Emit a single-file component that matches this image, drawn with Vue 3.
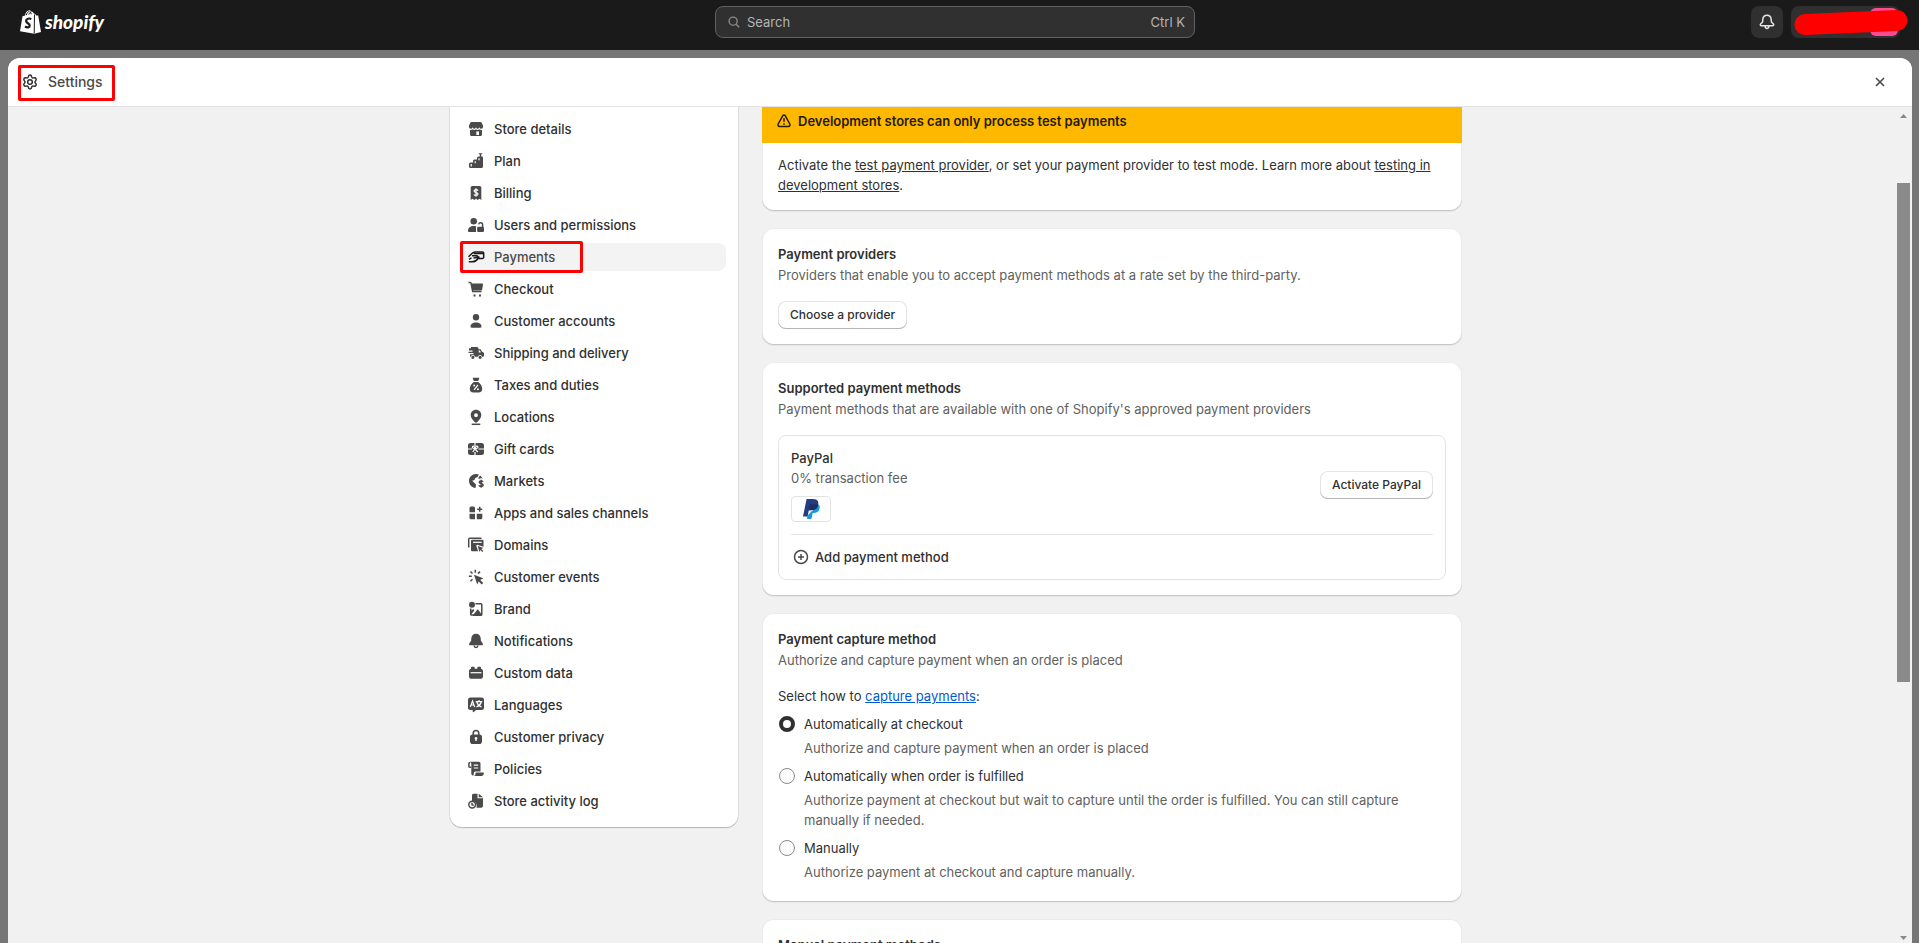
<script setup>
import { ref } from 'vue'

// Each icon is a list of [kind, path]: f = fill, s = stroke, w = white fill, l = white line
const navItems = [
  { label: 'Store details', shapes: [
    ['f', 'M5.6 3h8.800c.6 0 1 .3 1.300.8L17 6.500V8c0 1-.8 1.700-1.800 1.700S13.500 9 13.300 8.200C13 9 12.500 9.700 11.700 9.700S10.200 9 10 8.200C9.800 9 9.200 9.700 8.300 9.700S7 9 6.700 8.200C6.500 9 5.700 9.700 4.800 9.700S3 9 3 8V6.500l1.300-2.700c.3-.5.7-.8 1.300-.8z'],
    ['f', 'M4 11c1.200.2 2.200-.1 2.800-.7.900.8 2.300.8 3.200 0 .9.800 2.300.8 3.200 0 .6.600 1.600.9 2.800.7v4.500a1.500 1.500 0 0 1-1.500 1.500h-9A1.500 1.500 0 0 1 4 15.500zM10.300 12.500v3.500h2.700v-3.500z'],
  ] },
  { label: 'Plan', shapes: [
    ['f', 'M17 6.500v9a1.500 1.500 0 0 1-1.500 1.500h-11A1.500 1.500 0 0 1 3 15.500v-2.500a1.500 1.500 0 0 1 1.500-1.500H7V10a1.500 1.500 0 0 1 1.500-1.500H11V7a1.500 1.500 0 0 1 1.500-1.500H16a1 1 0 0 1 1 1z'],
    ['f', 'M12.500 2.300h4l-1.300 1.500V6h-1.400V3.800z'],
    ['l', 'M5.200 13v2.400M9.200 10.200v2M13 7.200v2'],
  ] },
  { label: 'Billing', shapes: [
    ['f', 'M6.200 3h7.600a1.500 1.500 0 0 1 1.500 1.500V17l-1.800-1.200L11.700 17 10 15.800 8.300 17l-1.800-1.200L4.700 17V4.500A1.500 1.500 0 0 1 6.200 3z'],
    ['l', 'M12 7.700c-.3-.7-1-1-2-1s-1.900.5-1.900 1.400c0 2 3.900.9 3.900 2.900 0 .9-.9 1.400-2 1.400s-1.800-.4-2-1.100M10 5.300v8.500'],
  ] },
  { label: 'Users and permissions', shapes: [
    ['f', 'M7.700 3a3.300 3.300 0 1 1 0 6.600 3.300 3.300 0 0 1 0-6.600zM7.700 11c1 0 1.800.1 2.500.4-.2.400-.2.900-.2 1.400V17H3.300C2.500 17 2 16.500 2 15.700 2 13 4.500 11 7.700 11z'],
    ['f', 'M12.300 11.800h4.500A1.200 1.200 0 0 1 18 13v2.800a1.200 1.200 0 0 1-1.200 1.200h-4.500a1.200 1.200 0 0 1-1.200-1.200V13a1.200 1.200 0 0 1 1.200-1.200z'],
    ['s', 'M12.700 9.300c.2-1 .9-1.500 1.900-1.500 1.200 0 2 .8 2 2v2.500'],
  ] },
  { label: 'Payments', active: true, shapes: [
    ['s', 'M2.500 9.700l3.700-3.400C7 5.500 7.800 5 9 5h7.500a1.200 1.200 0 0 1 1.200 1.200v4a1.200 1.200 0 0 1-1.200 1.200h-4.300'],
    ['s', 'M7.500 6.500h9.800M6 8.800h4.800c1.200 0 1.200 1.500 0 1.700L7.500 11M2.800 14.800h3.500c2.200 0 4-.6 5.700-3.300l1.300-2M3 12.300l2.500-1.500'],
  ] },
  { label: 'Checkout', shapes: [
    ['s', 'M2.600 3.500h1.500c.6 0 .9.300 1 .9l1.600 8.200h8.800'],
    ['f', 'M5 4.500h11a1 1 0 0 1 1 1.200l-.9 5a1 1 0 0 1-1 .8H6.300zM7.500 15.500h2v2h-2zM13 15.500h2v2h-2z'],
  ] },
  { label: 'Customer accounts', shapes: [
    ['f', 'M10 3a3.200 3.200 0 1 1 0 6.400A3.200 3.200 0 0 1 10 3zM10 11.500c3.200 0 5.500 1.600 5.500 4 0 .8-.5 1.200-1.200 1.200H5.700c-.7 0-1.200-.4-1.200-1.200 0-2.400 2.300-4 5.500-4z'],
  ] },
  { label: 'Shipping and delivery', shapes: [
    ['f', 'M5 4h6a1.500 1.500 0 0 1 1.500 1.500v.8h2l1.600 2.400 1.400.8c.4.300.5.600.5 1v2.300a1 1 0 0 1-1 1h-.8a2.200 2.200 0 0 0-4.300 0H9a2.200 2.200 0 0 0-4.300 0H4v-2.500h3.500V10H2.500V8.800h4V7.500h-3.500V5.300H5zM12.700 7.600v1.800h2.200l-1-1.800z'],
    ['f', 'M6.900 12.700a1.600 1.600 0 1 1 0 3.200 1.600 1.600 0 0 1 0-3.200zM14.100 12.700a1.600 1.600 0 1 1 0 3.200 1.600 1.600 0 0 1 0-3.200z'],
  ] },
  { label: 'Taxes and duties', shapes: [
    ['f', 'M7.300 2.800h5.400c.5 0 .7.400.5.800L12.200 6H7.800l-1-2.400c-.2-.4 0-.8.500-.8zM7.800 7h4.400c2.400 1.600 4 4.400 4 7 0 2.200-1.300 3.500-3.500 3.500H7.300c-2.200 0-3.500-1.300-3.500-3.500 0-2.600 1.600-5.400 4-7z'],
    ['l', 'M12 10l-4 4.800'],
    ['w', 'M8.200 9.500a1 1 0 1 1 0 2 1 1 0 0 1 0-2zM11.900 13.300a1 1 0 1 1 0 2 1 1 0 0 1 0-2z'],
  ] },
  { label: 'Locations', shapes: [
    ['f', 'M10 2.700c3.100 0 5.300 2.300 5.300 5.300 0 3.200-2.400 5.300-4.300 7.300-.6.600-1.400.6-2 0-1.900-2-4.300-4.100-4.300-7.300 0-3 2.200-5.300 5.300-5.300zM10 6.300a1.900 1.900 0 1 0 0 3.800 1.900 1.900 0 0 0 0-3.800z'],
    ['s', 'M5.700 17.300h8.600'],
  ] },
  { label: 'Gift cards', shapes: [
    ['f', 'M4.500 4h11A2.500 2.500 0 0 1 18 6.500v7a2.500 2.500 0 0 1-2.500 2.500h-11A2.500 2.500 0 0 1 2 13.500v-7A2.500 2.500 0 0 1 4.500 4z'],
    ['l', 'M9 4v3M9 13v3M2 10h4M12.500 10H18M9 10C7.500 9.800 5.800 8.700 6.500 7.500S9 7.800 9 10c0-2.200 2-3.700 2.800-2.500S10.500 9.800 9 10zM9 10l-2.300 3M9 10l2.800 3'],
  ] },
  { label: 'Markets', shapes: [
    ['f', 'M10 3c1 0 2 .2 2.900.6L11.500 6 9 7.200 8.500 9 6.200 9.800 8.500 12l1.500 1.500-.5 3.400C5.800 16.700 3 13.700 3 10c0-3.900 3.100-7 7-7zM14.200 4.400a7 7 0 0 1 2.500 3.400c-.7-.5-1.600-.6-2.500-.3L12.500 8l.2-1.700z'],
    ['s', 'M17 10.800c-.3-.6-1-.9-1.900-.9-1.100 0-1.900.4-1.900 1.300 0 1.900 3.900.9 3.900 2.800 0 .9-.9 1.400-2 1.400s-1.900-.4-2.100-1.100M15.100 8.700v8'],
  ] },
  { label: 'Apps and sales channels', shapes: [
    ['f', 'M5 3.500h2.500A1.500 1.500 0 0 1 9 5v4.200H3.500V5A1.500 1.500 0 0 1 5 3.500zM3.500 10.800H9v5.500H5a1.500 1.500 0 0 1-1.500-1.500zM10.800 10.800h5.500v4a1.500 1.500 0 0 1-1.500 1.500h-4z'],
    ['s', 'M13.700 3.700v5M11.200 6.200h5'],
  ] },
  { label: 'Domains', shapes: [
    ['s', 'M2.700 12.500V4.500c0-.8.500-1.300 1.300-1.300h11.500'],
    ['f', 'M6.300 4.800h10A1.200 1.200 0 0 1 17.500 6v5.800l-5.700-1.900c-1-.3-1.700.5-1.400 1.400l1.700 4.900H6.300A1.200 1.200 0 0 1 5 15V6a1.200 1.200 0 0 1 1.300-1.200z'],
    ['f', 'M11.800 11l5.700 2-2.200 1 2 2-1 1-2-2-.9 2z'],
    ['l', 'M7 7.300h8.700'],
  ] },
  { label: 'Customer events', shapes: [
    ['f', 'M8 7.800l9.300 3.400-3.100 1.700 3 3-1.500 1.500-3-3-1.500 3z'],
    ['s', 'M9.300 2.800v3M4.500 4.500l2 2M2.800 9.300h3M4.500 14.300l2-2M14 4.600l-2 2'],
  ] },
  { label: 'Brand', shapes: [
    ['f', 'M6 2.800a3 3 0 1 1 0 6 3 3 0 0 1 0-6z'],
    ['s', 'M9.500 4.800H15c.5 0 .8.300.8.800v9.700c0 .5-.3.800-.8.800H5.500c-.5 0-.8-.3-.8-.8V9.500'],
    ['f', 'M7 16.200l4-5.200c.4-.6 1-.6 1.400 0l3.400 4.500v1.500H7zM4.500 12l3-2 .8 1.500L5 15.500z'],
  ] },
  { label: 'Notifications', shapes: [
    ['f', 'M10 2.800c2.800 0 4.500 2 4.700 4.500l.2 2.500 1.800 2.600c.6.900 0 1.800-1 1.800H4.300c-1 0-1.600-.9-1-1.800l1.800-2.600.2-2.500c.2-2.500 1.900-4.500 4.700-4.500z'],
    ['s', 'M8 14.500c.2 1.300 1 2 2 2s1.800-.7 2-2'],
  ] },
  { label: 'Custom data', shapes: [
    ['f', 'M5 5c0-.7.400-1.200 1-1.200h1.700c.6 0 1 .5 1 1.200v.7h2.600V5c0-.7.4-1.200 1-1.200H14c.6 0 1 .5 1 1.200v.8c1.200.3 2 1.200 2 2.500v4.900c0 1.600-1 2.600-2.600 2.600H5.600C4 15.800 3 14.800 3 13.200V8.300c0-1.300.8-2.200 2-2.500z'],
    ['l', 'M4.500 9.700h11'],
  ] },
  { label: 'Languages', shapes: [
    ['f', 'M4.500 2.500h11A2.500 2.500 0 0 1 18 5v7.500a2.500 2.500 0 0 1-2.500 2.500H10l-2.200 2c-.5.400-1 .2-1-.4L6.500 15h-2A2.500 2.500 0 0 1 2 12.500V5a2.500 2.500 0 0 1 2.500-2.500z'],
    ['l', 'M4.300 12l2.200-6 2.200 6M5.200 10h2.700M9.700 6.700h6.600M13 5v1.700M15.200 7c-.5 2.200-2.200 4-4.700 5M10.900 7c.5 2.200 2.200 4 4.700 5'],
  ] },
  { label: 'Customer privacy', shapes: [
    ['s', 'M7.200 8.200V6.500C7.200 4.700 8.300 3.500 10 3.500s2.800 1.200 2.800 3v1.700'],
    ['f', 'M6.500 7.500h7A2.500 2.500 0 0 1 16 10v4.200a2.800 2.800 0 0 1-2.800 2.800H6.800A2.800 2.800 0 0 1 4 14.200V10a2.500 2.500 0 0 1 2.500-2.500zM10 10a1.400 1.400 0 0 0-.7 2.600V14h1.400v-1.400A1.400 1.400 0 0 0 10 10z'],
  ] },
  { label: 'Policies', shapes: [
    ['s', 'M5 8.200H3.800c-.6 0-.9-.3-.9-.9V5c0-.8.6-1.400 1.300-1.400'],
    ['f', 'M4.200 2.800h8.500A1.800 1.800 0 0 1 14.500 4.600v7.900H9.300a1.500 1.500 0 0 0-1.500 1.500v1.500c-.1 1-1 1.200-1.600.8-.6-.3-.9-.9-.9-1.500V4.500z'],
    ['l', 'M7.700 6.200h4.500M7.700 9h4.500'],
    ['f', 'M9.500 13.500h8.200v1.200c0 1.300-.9 2.200-2.200 2.200H8c.9-.5 1.500-1.100 1.500-2z'],
  ] },
  { label: 'Store activity log', shapes: [
    ['f', 'M7.500 2.800h4v4.500h5.500v7.500a2 2 0 0 1-2 2h-4.500c1-3.500-.7-6.500-4.500-6.800V4.500c0-1 .6-1.700 1.500-1.700zM12.700 2.800L17 6.200h-4.300z'],
    ['s', 'M6.200 10.200a3.400 3.400 0 1 1 0 6.800 3.400 3.400 0 0 1 0-6.800zM6 11.800v2l1.700.6'],
  ] },
]

const captureOptions = [
  { id: 'auto', label: 'Automatically at checkout', help: 'Authorize and capture payment when an order is placed' },
  { id: 'fulfilled', label: 'Automatically when order is fulfilled', help: 'Authorize payment at checkout but wait to capture until the order is fulfilled. You can still capture manually if needed.' },
  { id: 'manual', label: 'Manually', help: 'Authorize payment at checkout and capture manually.' },
]
const capture = ref('auto')
</script>

<template>
  <div class="app">
    <header class="topbar">
      <a class="logo" href="#" aria-label="Shopify home">
        <svg class="bag" viewBox="0 0 21 24">
          <path fill="#fff" d="M2.500 6.200L5 5.400C5.600 2.500 7.300.3 9.300.3c.8 0 1.400.5 1.800 1.100 1.400-.2 2.400.9 2.900 2.300l1 .1 1.200 1.600 2 .2L21 22l-6.700 1.700L0 21.200z" />
          <path stroke="#1a1a1a" stroke-width="1" fill="none" d="M6.300 5.200c.5-2.200 1.700-3.600 3-3.700M8.900 4.500c.4-1.400 1-2.200 1.900-2.300M10.200 1.700c.7.600.9 1.600.9 2.600M14.500 4.500l-.3 19" />
          <path stroke="#1a1a1a" stroke-width="2.200" fill="none" d="M11.300 9c-3-1.300-5.300.3-5.200 2.100.1 2 3.600 2.300 3.600 4.500 0 1.900-2.300 2.500-4.700.9" />
        </svg>
        <span class="wordmark">shopify</span>
      </a>
      <label class="search">
        <svg class="search-icon" viewBox="0 0 14 14"><circle cx="6" cy="6" r="4.700" /><path d="M9.500 9.500l3.500 3.500" /></svg>
        <input type="text" placeholder="Search" aria-label="Search" />
        <kbd>Ctrl K</kbd>
      </label>
      <div class="top-actions">
        <button class="bell" aria-label="Notifications">
          <svg viewBox="0 0 20 20"><path d="M10 3.200c2.600 0 4 1.800 4.200 4.200l.2 2.500 2 2.200c.6.700.2 1.600-.7 1.600H4.300c-.9 0-1.300-.9-.7-1.600l2-2.200.2-2.500C6 5 7.400 3.200 10 3.200zM8 14c.1 1.500.9 2.400 2 2.400s1.900-.9 2-2.400" /></svg>
        </button>
        <button class="user" aria-label="Account">
          <span class="avatar"></span>
          <svg class="scribble" viewBox="0 0 120 32"><path d="M14 18.500L106 14.500" /></svg>
        </button>
      </div>
    </header>

    <section class="modal">
      <header class="modal-head">
        <div class="title">
          <svg class="gear" viewBox="0 0 20 20">
            <path d="M8.300 4.200C8.500 3 9 2.400 10 2.400s1.500.6 1.700 1.800c.2.800 1.100 1.300 1.900 1 1.100-.4 1.900-.2 2.400.7s.3 1.600-.6 2.400c-.6.500-.6 1.500 0 2 .9.800 1.100 1.500.6 2.400-.5.900-1.300 1.100-2.400.7-.8-.3-1.700.2-1.900 1-.2 1.200-.7 1.800-1.700 1.800s-1.500-.6-1.700-1.800c-.2-.8-1.100-1.300-1.900-1-1.100.4-1.900.2-2.400-.7-.5-.9-.3-1.600.6-2.400.6-.5.6-1.500 0-2-.9-.8-1.100-1.500-.6-2.400s1.300-1.100 2.400-.7c.8.300 1.700-.2 1.900-1z" transform="translate(0 .7)" />
            <circle cx="10" cy="10" r="2.300" />
          </svg>
          <h1>Settings</h1>
          <span class="mark mark-title"></span>
        </div>
        <button class="close" aria-label="Close"><svg viewBox="0 0 10 10"><path d="M1 1l8 8M9 1l-8 8" /></svg></button>
      </header>

      <div class="body">
        <div class="page">
          <nav class="sidebar">
            <a v-for="item in navItems" :key="item.label" href="#" class="nav-item" :class="{ active: item.active }">
              <svg class="nav-icon" viewBox="0 0 20 20" aria-hidden="true">
                <path v-for="(s, i) in item.shapes" :key="i" :class="s[0]" :d="s[1]" />
              </svg>
              <span>{{ item.label }}</span>
              <span v-if="item.active" class="mark mark-nav"></span>
            </a>
          </nav>

          <main class="cards">
            <section class="card banner">
              <h2 class="banner-head">
                <svg viewBox="0 0 16 16"><path d="M8 2c.6 0 1 .3 1.300.8l4.500 8.200c.6 1.200-.1 2.500-1.400 2.500H3.600c-1.300 0-2-1.300-1.400-2.500L6.700 2.800C7 2.300 7.400 2 8 2zM8 5.300v3.500M8 10.300v1.400" /></svg>
                Development stores can only process test payments
              </h2>
              <p class="banner-text">
                Activate the <a href="#">test payment provider</a>, or set your payment provider to test mode. Learn more about <a href="#">testing in development stores</a>.
              </p>
            </section>

            <section class="card">
              <h2>Payment providers</h2>
              <p class="sub">Providers that enable you to accept payment methods at a rate set by the third-party.</p>
              <button class="btn">Choose a provider</button>
            </section>

            <section class="card">
              <h2>Supported payment methods</h2>
              <p class="sub">Payment methods that are available with one of Shopify's approved payment providers</p>
              <div class="methods">
                <div class="method">
                  <div>
                    <h3>PayPal</h3>
                    <p class="fee">0% transaction fee</p>
                    <div class="pp">
                      <svg viewBox="0 0 18 20" aria-label="PayPal">
                        <path fill="#179bd7" d="M16.500 5.500c1.300 1 1.500 2.500 1.100 4.200-.8 3.200-3 4.300-5.900 4.300h-1l-1 5c-.1.600-.4 1-1 1H5l.5-3.500z" />
                        <path fill="#253b80" d="M4.600 0h6.200c4 0 6.200 1.800 5.400 5.700-.8 4-3.600 5.500-7.300 5.500H6.800l-1.200 6.300H1z" />
                        <path fill="#222d65" d="M7.800 5.300h6.500c.8 0 1.400.1 2 .4-.8 4-3.700 5.500-7.400 5.500H6.800z" />
                      </svg>
                    </div>
                  </div>
                  <button class="btn">Activate PayPal</button>
                </div>
                <button class="add">
                  <svg viewBox="0 0 16 16"><circle cx="8" cy="8" r="6.500" /><path d="M8 5v6M5 8h6" /></svg>
                  Add payment method
                </button>
              </div>
            </section>

            <section class="card">
              <h2>Payment capture method</h2>
              <p class="sub">Authorize and capture payment when an order is placed</p>
              <p class="lead">Select how to <a href="#">capture payments</a>:</p>
              <div v-for="o in captureOptions" :key="o.id" class="choice">
                <label :for="o.id"><input :id="o.id" v-model="capture" type="radio" name="capture" :value="o.id" />{{ o.label }}</label>
                <p>{{ o.help }}</p>
              </div>
            </section>

            <section class="card">
              <h2>Manual payment methods</h2>
            </section>
          </main>
        </div>

        <div class="scrollbar" aria-hidden="true">
          <svg viewBox="0 0 7 4"><path d="M3.500 0L7 4H0z" /></svg>
          <div class="track"><span class="before"></span><span class="thumb"></span><span class="after"></span></div>
          <svg viewBox="0 0 7 4"><path d="M0 0h7L3.500 4z" /></svg>
        </div>
      </div>
    </section>
  </div>
</template>

<style>
body { margin: 0; background: #767676; }
</style>

<style scoped>
.app {
  display: flex;
  flex-direction: column;
  height: 100vh;
  overflow: hidden;
  background: #767676;
  color: #303030;
  font: 420 13px/20px Inter, "Liberation Sans", sans-serif;
}
.app *, .app { box-sizing: border-box; }
h1, h2, h3, p { margin: 0; font-size: 13px; line-height: 20px; font-weight: 420; }
button, input, kbd { font: inherit; color: inherit; }
button { cursor: pointer; }

.topbar {
  display: grid;
  grid-template-columns: 1fr minmax(0, 480px) 1fr;
  align-items: start;
  flex: none;
  height: 50px;
  padding: 6px 19px 0 10px;
  background: #1a1a1a;
}
.logo { display: flex; align-items: center; gap: 4px; height: 32px; padding-left: 10px; color: #fff; text-decoration: none; }
.bag { width: 21px; height: 24px; }
.wordmark { font: italic 900 19px/24px Lato, sans-serif; }
.search {
  display: flex;
  align-items: center;
  height: 32px;
  padding: 0 9px 0 12px;
  border: 1px solid #616161;
  border-radius: 8px;
  background: #303030;
  color: #b5b5b5;
}
.search-icon { width: 12px; height: 12px; margin-right: 7px; fill: none; stroke: #8a8a8a; stroke-width: 1.600; }
.search input { flex: 1; min-width: 0; padding: 0; border: 0; outline: 0; background: none; }
.search input::placeholder { color: #b5b5b5; opacity: 1; }
.top-actions { display: flex; justify-content: flex-end; gap: 8px; }
.bell, .user { height: 32px; padding: 0; border: 0; border-radius: 8px; background: #303030; }
.bell { width: 32px; }
.bell svg { display: block; width: 20px; height: 20px; margin: auto; fill: none; stroke: #e3e3e3; stroke-width: 1.500; }
.user { position: relative; display: flex; justify-content: flex-end; align-items: center; width: 109px; padding-right: 2px; }
.avatar { width: 28px; height: 28px; border-radius: 6px; background: #fd4b92; }
.scribble { position: absolute; top: 0; left: 0; width: 120px; height: 32px; fill: none; stroke: #f00; stroke-width: 21; stroke-linecap: round; }

.modal { display: flex; flex-direction: column; flex: 1; min-height: 0; margin: 8px 7px 0 8px; border-radius: 12px 12px 0 0; background: #f1f1f1; overflow: hidden; }
.modal-head { display: flex; align-items: center; justify-content: space-between; flex: none; height: 49px; padding: 0 22px 0 12px; border-bottom: 1px solid #e3e3e3; background: #fff; }
.title { position: relative; display: flex; align-items: center; gap: 8px; }
.title h1 { font-size: 14px; font-weight: 550; color: #4a4a4a; }
.gear { width: 20px; height: 20px; fill: none; stroke: #303030; stroke-width: 1.500; }
.mark { position: absolute; border: 3px solid #f00; border-radius: 2px; pointer-events: none; }
.mark-title { inset: -7px -12px -9px -2px; }
.mark-nav { inset: -2px auto -2px -2px; width: 123px; }
.close { display: flex; padding: 5px; border: 0; background: none; }
.close svg { width: 10px; height: 10px; fill: none; stroke: #4a4a4a; stroke-width: 1.600; }

.body { position: relative; flex: 1; min-height: 0; overflow: hidden; }
.page { display: flex; align-items: flex-start; justify-content: center; gap: 24px; margin-right: 8px; }
.sidebar {
  display: flex;
  flex-direction: column;
  gap: 4px;
  flex: 0 1 288px;
  padding: 8px 12px 12px;
  border-radius: 0 0 12px 12px;
  background: #fff;
  box-shadow: 0 1px 1px #0003, 0 0 0 1px #0000000f;
}
.nav-item { position: relative; display: flex; align-items: center; gap: 8px; height: 28px; padding: 0 4px; border-radius: 8px; color: #303030; font-weight: 500; text-decoration: none; }
.nav-item.active { background: #f3f3f3; color: #4a4a4a; }
.nav-icon { flex: none; width: 20px; height: 20px; }
.f { fill: #4a4a4a; fill-rule: evenodd; }
.w { fill: #fff; }
.s { fill: none; stroke: #4a4a4a; stroke-width: 1.500; }
.l { fill: none; stroke: #fff; stroke-width: 1.200; }
.active .s { stroke: #1a1a1a; }

.cards { display: flex; flex-direction: column; gap: 17px; flex: 0 1 700px; min-width: 0; }
.card { padding: 16px; border-radius: 12px; background: #fff; box-shadow: inset 0 -1px 0 #00000026, inset 0 0 0 1px #00000014, 0 1px 1px #0000000d; }
.card h2 { font-weight: 600; }
.sub { margin: 1px 0 16px; color: #616161; }
.banner { padding: 0; border-radius: 0 0 12px 12px; }
.card .banner-head { display: flex; align-items: center; gap: 6px; padding: 4px 14px 12px; background: #ffb800; color: #251a00; }
.banner-head svg { width: 16px; height: 16px; fill: none; stroke: #251a00; stroke-width: 1.500; }
.banner-text { padding: 12px 16px 16px; }
.banner-text a { color: inherit; }
.btn {
  height: 28px;
  padding: 0 12px;
  border: 0;
  border-radius: 8px;
  background: #fff;
  box-shadow: inset 0 -1px 0 #b5b5b5, inset 0 0 0 1px #0000001a;
  font-size: 12px;
  font-weight: 550;
}
.card > .btn { display: block; }
.methods { padding: 12px 12px 0; border: 1px solid #e3e3e3; border-radius: 8px; }
.method { display: flex; align-items: center; justify-content: space-between; padding-bottom: 12px; border-bottom: 1px solid #e3e3e3; }
.method h3 { font-weight: 500; }
.fee { color: #616161; }
.pp { display: flex; align-items: center; justify-content: center; width: 40px; height: 26px; margin-top: 8px; border: 1px solid #e3e3e3; border-radius: 4px; }
.pp svg { width: 18px; height: 20px; }
.add { display: flex; align-items: center; gap: 6px; height: 44px; padding: 0 2px; border: 0; background: none; font-weight: 500; }
.add svg { width: 16px; height: 16px; fill: none; stroke: #4a4a4a; stroke-width: 1.500; }
.lead { margin-bottom: 4px; }
.lead a { color: #005bd3; }
.choice { padding-bottom: 4px; }
.choice label { display: flex; align-items: center; gap: 9px; height: 28px; }
.choice input { appearance: none; flex: none; width: 16px; height: 16px; margin: 0 0 0 1px; border: 1px solid #8a8a8a; border-radius: 50%; background: #fdfdfd; }
.choice input:checked { border: 4px solid #303030; background: #fff; }
.choice p { padding-left: 26px; color: #616161; }

.scrollbar { position: absolute; top: 0; right: 2px; bottom: 0; display: flex; flex-direction: column; align-items: center; width: 13px; padding: 7px 0 3px; }
.scrollbar svg { flex: none; width: 7px; height: 4px; fill: #8a8a8a; }
.track { display: flex; flex-direction: column; flex: 1; align-self: stretch; }
.before { flex: 65; }
.thumb { flex: 499; background: #8a8a8a; }
.after { flex: 254; }
</style>
